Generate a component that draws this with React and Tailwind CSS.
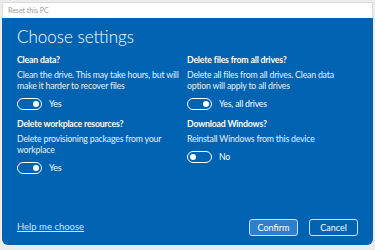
import React from "react";

const Toggle = ({ on }) => (
  <div
    className={`w-[25px] h-[12px] rounded-full border border-white flex items-center px-[2px] ${
      on ? "bg-[#0063b1] justify-end" : "bg-transparent justify-start"
    }`}
  >
    <div className="w-[6px] h-[6px] rounded-full bg-white" />
  </div>
);

const Setting = ({ title, lines, on, label }) => (
  <div className="flex flex-col whitespace-nowrap tracking-[-0.2px]">
    <div className="text-[8.75px] font-bold text-white leading-[12px]">{title}</div>
    <div className="mt-[3px] text-[8.75px] text-[#e8f0f9] leading-[11px]">
      {lines.map((l, i) => (
        <div key={i}>{l}</div>
      ))}
    </div>
    <div className="mt-[7px] flex items-center gap-[7px]">
      <Toggle on={on} />
      <span className="text-[8.75px] text-white leading-[12px]">{label}</span>
    </div>
  </div>
);

export default function App() {
  return (
    <div
      className="w-[375px] h-[250px] bg-[#ececec] px-[2px] pt-[2px] pb-[5px] flex flex-col"
      style={{ fontFamily: 'Lato, "Noto Sans", sans-serif' }}
    >
      <div className="h-[16px] bg-white flex items-center pl-[5px] border border-[#dcdcdc] border-b-0">
        <span className="text-[7px] text-[#9a9a9a]">Reset this PC</span>
      </div>
      <div className="flex-1 bg-[#0063b1] rounded-b-[6px] px-[15px] pt-[8px] pb-[9px] flex flex-col">
        <div className="text-[17px] text-white font-light leading-[22px]">Choose settings</div>
        <div className="mt-[6px] grid grid-cols-[170px_1fr] gap-y-[8px]">
          <Setting
            title="Clean data?"
            lines={["Clean the drive. This may take hours, but will", "make it harder to recover files"]}
            on
            label="Yes"
          />
          <Setting
            title="Delete files from all drives?"
            lines={["Delete all files from all drives. Clean data", "option will apply to all drives"]}
            on
            label="Yes, all drives"
          />
          <Setting
            title="Delete workplace resources?"
            lines={["Delete provisioning packages from your", "workplace"]}
            on
            label="Yes"
          />
          <Setting
            title="Download Windows?"
            lines={["Reinstall Windows from this device"]}
            on={false}
            label="No"
          />
        </div>
        <div className="mt-auto flex items-center justify-between">
          <span className="text-[9.5px] text-[#cfe2f5] underline">Help me choose</span>
          <div className="flex gap-[11px]">
            <button className="w-[49px] h-[17px] rounded-[3px] border border-[#cfe3f6] bg-[#2a80cf] text-[9px] text-white leading-none">
              Confirm
            </button>
            <button className="w-[49px] h-[17px] rounded-[3px] border border-[#cfe3f6] bg-[#0063b1] text-[9px] text-white leading-none">
              Cancel
            </button>
          </div>
        </div>
      </div>
    </div>
  );
}
